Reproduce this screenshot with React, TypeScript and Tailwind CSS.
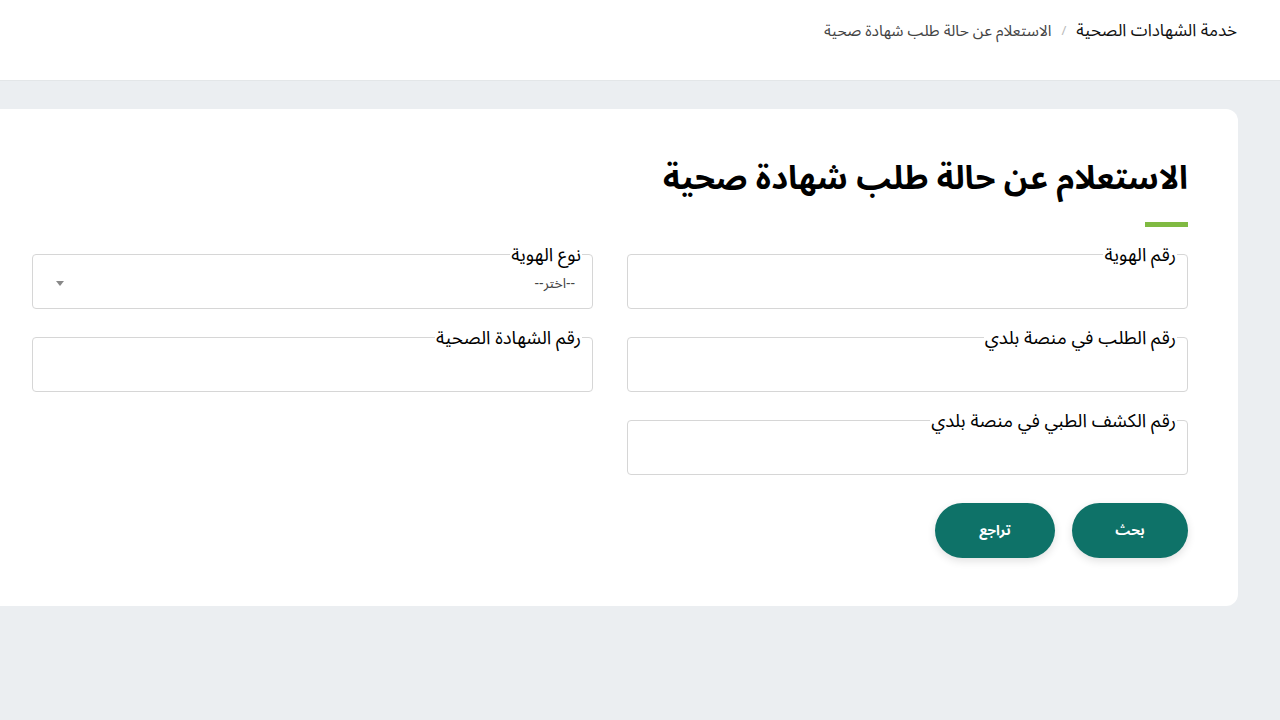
import React from "react";

const font = { fontFamily: '"Noto Sans Arabic", "Noto Kufi Arabic", "DejaVu Sans", sans-serif' };

function Field({ label, select }: { label: string; select?: boolean }) {
  return (
    <div className="relative h-[55px] w-[561px] rounded-[4px] border border-[#d6d6d6] bg-white">
      <span className="absolute right-[10px] top-[-11px] bg-white px-[1px] text-[18.5px] leading-[24px] text-black">
        {label}
      </span>
      {select && (
        <div className="flex h-full items-center justify-between pr-[17px] pl-[23px] pt-[4px]">
          <span className="text-[14px] leading-[18px] text-[#444]">--اختر--</span>
          <svg width="8" height="5" viewBox="0 0 8 5">
            <path d="M0 0 H8 L4 5 Z" fill="#888" />
          </svg>
        </div>
      )}
    </div>
  );
}

export default function App() {
  return (
    <div dir="rtl" style={font} className="min-h-[720px] w-[1280px] overflow-hidden bg-[#ebeef1]">
      <header className="h-[81px] border-b border-[#e3e6e8] bg-white">
        <div className="flex items-center gap-[10px] pr-[43px] pt-[19px]">
          <span className="text-[17px] text-[#111]">خدمة الشهادات الصحية</span>
          <span className="text-[13px] text-[#bbb]">/</span>
          <span className="text-[15.5px] text-[#444]">الاستعلام عن حالة طلب شهادة صحية</span>
        </div>
      </header>
      <div className="flex pt-[28px]">
        <div className="mr-[42px] w-[1260px] shrink-0 rounded-[12px] bg-white pb-[48px] pr-[50px] pt-[45px]">
          <h1 className="text-[32.5px] font-bold leading-[50px] text-black">الاستعلام عن حالة طلب شهادة صحية</h1>
          <div className="mt-[18px] h-[5px] w-[43px] bg-[#80ba42]" />
          <div className="mt-[27px] grid w-[1156px] grid-cols-2 gap-x-[34px] gap-y-[28px]">
            <Field label="رقم الهوية" />
            <Field label="نوع الهوية" select />
            <Field label="رقم الطلب في منصة بلدي" />
            <Field label="رقم الشهادة الصحية" />
            <Field label="رقم الكشف الطبي في منصة بلدي" />
          </div>
          <div className="mt-[28px] flex gap-[17px]">
            <button className="h-[55px] w-[116px] rounded-full bg-[#0e7268] text-[14px] font-bold text-white shadow-[0_3px_8px_rgba(0,0,0,0.12)]">
              بحث
            </button>
            <button className="h-[55px] w-[120px] rounded-full bg-[#0e7268] text-[14px] font-bold text-white shadow-[0_3px_8px_rgba(0,0,0,0.12)]">
              تراجع
            </button>
          </div>
        </div>
      </div>
    </div>
  );
}
